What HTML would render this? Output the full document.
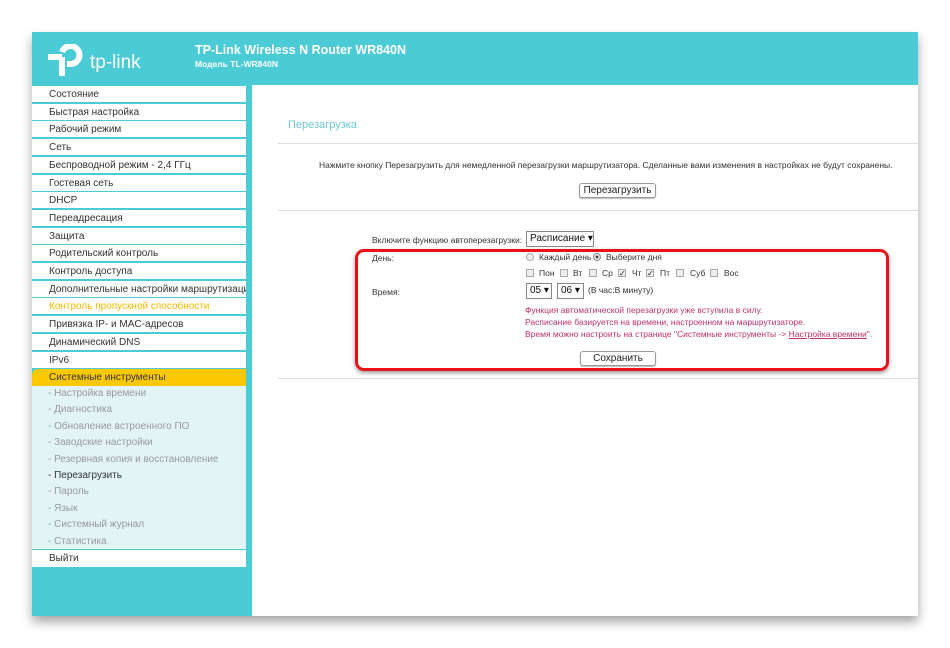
<!DOCTYPE html>
<html><head><meta charset="utf-8"><style>
*{margin:0;padding:0;box-sizing:border-box}
body{width:950px;height:648px;background:#fff;font-family:"Liberation Sans",Arial,sans-serif;position:relative;overflow:hidden}
#frame{position:absolute;left:32px;top:32px;width:886px;height:584px;background:#4acbd6;box-shadow:0 6px 10px rgba(0,0,0,.35)}
.abs{position:absolute}
#content{position:absolute;left:252px;top:85px;width:666px;height:531px;background:#fff}
.mi{position:absolute;left:32px;width:214px;height:16px;background:#fff;font-size:10px;color:#333;padding-left:17px;line-height:17px;white-space:nowrap;overflow:hidden}
.sub{position:absolute;left:48px;font-size:10px;color:#999;white-space:nowrap}
.t{position:absolute;font-size:8.5px;color:#333;white-space:nowrap}
.r{color:#c0306a}
.btn{position:absolute;border:1px solid #999;border-radius:3px;background:#fff;font-size:10px;color:#222;text-align:center;box-shadow:0 1px 1px #bbb}
.cb{position:absolute;width:8px;height:8px;border:1px solid #aaa;background:#eee;font-size:8px;line-height:7px;color:#222;text-align:center}
.sel{position:absolute;border:1px solid #888;background:#fff;font-size:10px;color:#111;padding-left:3px;line-height:14px;height:16px}
</style></head><body>
<div id="frame"></div>
<svg class="abs" style="left:48px;top:44px" width="40" height="34" viewBox="0 0 40 34">
<path d="M0 13 H14 M14 13 V32" stroke="#fff" stroke-width="6" fill="none"/>
<path d="M14 8 A9 9 0 1 1 23 20 H19" stroke="#fff" stroke-width="6" fill="none"/>
</svg>
<div class="abs" style="left:90px;top:52px;font-size:19px;color:#fff">tp-link</div>
<div class="abs" style="left:195px;top:43px;font-size:12.5px;font-weight:bold;color:#fff">TP-Link Wireless N Router WR840N</div>
<div class="abs" style="left:195px;top:59px;font-size:8.5px;font-weight:bold;color:#fff">Модель TL-WR840N</div>
<div id="content"></div>
<div class="mi" style="top:86px">Состояние</div>
<div class="mi" style="top:103.7px">Быстрая настройка</div>
<div class="mi" style="top:121.4px">Рабочий режим</div>
<div class="mi" style="top:139.1px">Сеть</div>
<div class="mi" style="top:156.8px">Беспроводной режим - 2,4 ГГц</div>
<div class="mi" style="top:174.5px">Гостевая сеть</div>
<div class="mi" style="top:192.2px">DHCP</div>
<div class="mi" style="top:209.9px">Переадресация</div>
<div class="mi" style="top:227.6px">Защита</div>
<div class="mi" style="top:245.3px">Родительский контроль</div>
<div class="mi" style="top:263px">Контроль доступа</div>
<div class="mi" style="top:280.7px">Дополнительные настройки маршрутизации</div>
<div class="mi" style="top:298.4px;color:#f5b800">Контроль пропускной способности</div>
<div class="mi" style="top:316.1px">Привязка IP- и MAC-адресов</div>
<div class="mi" style="top:333.8px">Динамический DNS</div>
<div class="mi" style="top:351.5px">IPv6</div>
<div class="mi" style="top:369px;height:17px;background:#fcc800;color:#333;border-top-left-radius:6px">Системные инструменты</div>
<div class="abs" style="left:32px;top:386px;width:214px;height:163px;background:#e3f4f6"></div>
<div class="sub" style="top:388px">- Настройка времени</div>
<div class="sub" style="top:404.4px">- Диагностика</div>
<div class="sub" style="top:420.8px">- Обновление встроенного ПО</div>
<div class="sub" style="top:437.2px">- Заводские настройки</div>
<div class="sub" style="top:453.6px">- Резервная копия и восстановление</div>
<div class="sub" style="top:470px;color:#333">- Перезагрузить</div>
<div class="sub" style="top:486.4px">- Пароль</div>
<div class="sub" style="top:502.8px">- Язык</div>
<div class="sub" style="top:519.2px">- Системный журнал</div>
<div class="sub" style="top:535.6px">- Статистика</div>
<div class="mi" style="top:550px;height:17px">Выйти</div>

<div class="abs" style="left:288px;top:119px;font-size:11px;color:#6cc9d6">Перезагрузка</div>
<div class="abs" style="left:278px;top:143px;width:640px;height:1px;background:#ddd"></div>
<div class="t" style="left:319px;top:160px">Нажмите кнопку Перезагрузить для немедленной перезагрузки маршрутизатора. Сделанные вами изменения в настройках не будут сохранены.</div>
<div class="btn" style="left:579px;top:183px;width:77px;height:15px;line-height:13px">Перезагрузить</div>
<div class="abs" style="left:278px;top:210px;width:640px;height:1px;background:#ddd"></div>
<div class="t" style="left:372px;top:235px">Включите функцию автоперезагрузки:</div>
<div class="sel" style="left:526px;top:231px;width:68px">Расписание ▾</div>
<div class="t" style="left:372px;top:253px">День:</div>
<div class="abs" style="left:526px;top:253px;width:8px;height:8px;border-radius:50%;border:1px solid #aaa;background:#eee"></div>
<div class="t" style="left:539px;top:252px">Каждый день</div>
<div class="abs" style="left:593px;top:253px;width:8px;height:8px;border-radius:50%;border:1px solid #888;background:radial-gradient(#444 30%,#eee 40%)"></div>
<div class="t" style="left:606px;top:252px">Выберите дня</div>
<div class="cb" style="left:526px;top:269px"></div><div class="t" style="left:539px;top:268px">Пон</div>
<div class="cb" style="left:560px;top:269px"></div><div class="t" style="left:573px;top:268px">Вт</div>
<div class="cb" style="left:589px;top:269px"></div><div class="t" style="left:602px;top:268px">Ср</div>
<div class="cb" style="left:618px;top:269px">✓</div><div class="t" style="left:632px;top:268px">Чт</div>
<div class="cb" style="left:646px;top:269px">✓</div><div class="t" style="left:660px;top:268px">Пт</div>
<div class="cb" style="left:676px;top:269px"></div><div class="t" style="left:690px;top:268px">Суб</div>
<div class="cb" style="left:710px;top:269px"></div><div class="t" style="left:724px;top:268px">Вос</div>
<div class="t" style="left:372px;top:287px">Время:</div>
<div class="sel" style="left:526px;top:283px;width:26px">05 ▾</div>
<div class="sel" style="left:557px;top:283px;width:27px">06 ▾</div>
<div class="t" style="left:588px;top:285px">(В час:В минуту)</div>
<div class="t r" style="left:525px;top:305px">Функция автоматической перезагрузки уже вступила в силу.</div>
<div class="t r" style="left:525px;top:317px">Расписание базируется на времени, настроенном на маршрутизаторе.</div>
<div class="t r" style="left:525px;top:329px">Время можно настроить на странице "Системные инструменты -> <u>Настройка времени</u>".</div>
<div class="btn" style="left:580px;top:351px;width:76px;height:15px;line-height:13px">Сохранить</div>
<div class="abs" style="left:278px;top:378px;width:640px;height:1px;background:#ddd"></div>
<div class="abs" style="left:355px;top:249px;width:534px;height:122px;border:3px solid #e8121a;border-radius:9px;box-shadow:0 2px 4px rgba(0,0,0,.4)"></div>
</body></html>
